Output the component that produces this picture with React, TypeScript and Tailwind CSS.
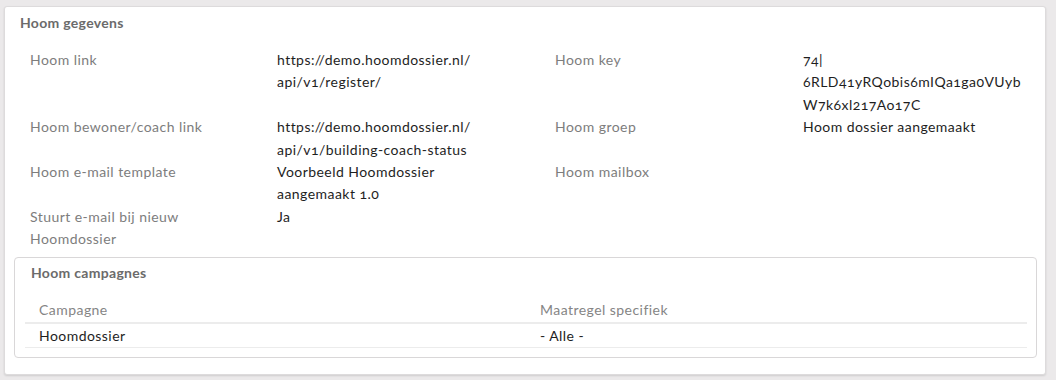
import React from "react";

const rows: { l1: string[]; v1: string[]; l2: string; v2: string[] }[] = [
  {
    l1: ["Hoom link"],
    v1: ["https://demo.hoomdossier.nl/", "api/v1/register/"],
    l2: "Hoom key",
    v2: ["74|", "6RLD41yRQobis6mIQa1ga0VUyb", "W7k6xl217Ao17C"],
  },
  {
    l1: ["Hoom bewoner/coach link"],
    v1: ["https://demo.hoomdossier.nl/", "api/v1/building-coach-status"],
    l2: "Hoom groep",
    v2: ["Hoom dossier aangemaakt"],
  },
  {
    l1: ["Hoom e-mail template"],
    v1: ["Voorbeeld Hoomdossier", "aangemaakt 1.0"],
    l2: "Hoom mailbox",
    v2: [],
  },
  {
    l1: ["Stuurt e-mail bij nieuw", "Hoomdossier"],
    v1: ["Ja"],
    l2: "",
    v2: [],
  },
];

function Lines({ lines }: { lines: string[] }) {
  return (
    <div>
      {lines.map((t, i) => (
        <div key={i}>{t}</div>
      ))}
    </div>
  );
}

export default function App() {
  return (
    <div
      className="h-[380px] w-[1056px] bg-[#ebe9ea] pt-[6px] pl-[4px] text-[14px] leading-[22.4px] tracking-[0.45px] [font-variant-numeric:oldstyle-nums]"
      style={{ fontFamily: "Lato, 'Open Sans', sans-serif" }}
    >
      <div className="flex h-[369px] w-[1042px] flex-col rounded-[3px] border border-[#dddbdc] bg-white shadow-[0_1px_2px_rgba(0,0,0,0.12)]">
        <div className="pl-[15px] pt-[5px] text-[14px] font-bold leading-[22px] tracking-[0.3px] text-[#6b6b6b]">
          Hoom gegevens
        </div>
        <div className="mt-[15px] grid grid-cols-[247px_278px_248px_1fr] pl-[25px]">
          {rows.map((r, i) => (
            <React.Fragment key={i}>
              <div className="text-[#7d7d7d]">
                <Lines lines={r.l1} />
              </div>
              <div className="text-[#1e1e1e]">
                <Lines lines={r.v1} />
              </div>
              <div className="text-[#7d7d7d]">{r.l2}</div>
              <div className="text-[#1e1e1e]">
                <Lines lines={r.v2} />
              </div>
            </React.Fragment>
          ))}
        </div>
        <div className="ml-[9px] mr-[8px] mt-[6px] h-[101px] rounded-[4px] border border-[#d9d7d8] pb-[10px] pl-[10px] pr-[9px]">
          <div className="pl-[6px] pt-[4px] text-[14px] font-bold leading-[22px] tracking-[0.3px] text-[#6b6b6b]">
            Hoom campagnes
          </div>
          <table className="mt-[15px] w-full border-collapse">
            <thead>
              <tr className="border-b-2 border-[#ececec]">
                <th className="w-1/2 pb-[1px] pl-[14px] text-left font-normal leading-[22px] text-[#858585]">
                  Campagne
                </th>
                <th className="w-1/2 pb-[1px] pl-[14px] text-left font-normal leading-[22px] text-[#858585]">
                  Maatregel specifiek
                </th>
              </tr>
            </thead>
            <tbody>
              <tr className="border-b border-[#ececec]">
                <td className="pl-[14px] leading-[23px] text-[#1e1e1e]">Hoomdossier</td>
                <td className="pl-[14px] leading-[23px] text-[#1e1e1e]">- Alle -</td>
              </tr>
            </tbody>
          </table>
        </div>
      </div>
    </div>
  );
}
